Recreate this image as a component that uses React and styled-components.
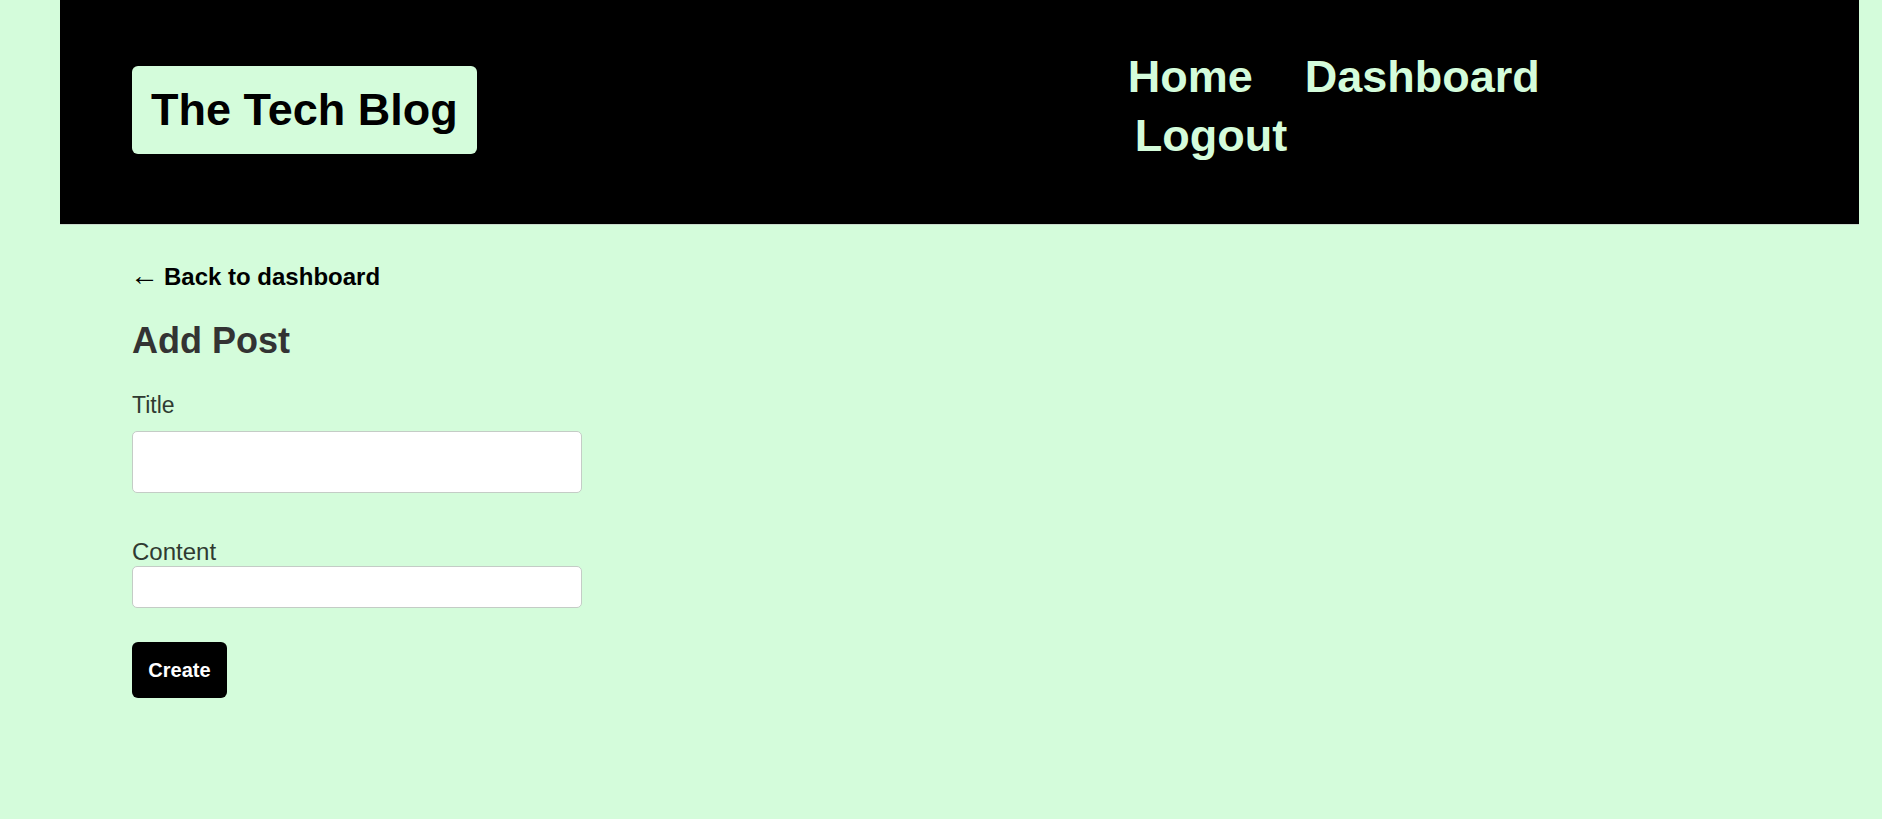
import React from 'react';
import styled, { createGlobalStyle } from 'styled-components';

const GlobalStyle = createGlobalStyle`
  html, body {
    margin: 0;
    padding: 0;
    background: #d4fcdb;
    font-family: 'Liberation Sans', Arial, sans-serif;
    color: #333;
  }
  * { box-sizing: border-box; }
`;

const Page = styled.div`
  min-height: 819px;
  padding: 0 23px 0 60px;
`;

const Header = styled.header`
  height: 225px;
  background: #000;
  border-bottom: 1px solid #c8d9cb;
  display: flex;
  align-items: center;
  padding: 0 72px;
`;

const Logo = styled.a`
  display: block;
  background: #d4fcdb;
  color: #000;
  border-radius: 6px;
  padding: 19px 19px;
  margin-bottom: 5px;
  font-weight: 700;
  font-size: 45px;
  line-height: 50px;
  text-decoration: none;
`;

const Nav = styled.nav`
  display: flex;
  flex-wrap: wrap;
  column-gap: 52px;
  width: 460px;
  margin-left: 651px;
  margin-bottom: 13px;
`;

const NavLink = styled.a`
  color: #d4fcdb;
  font-weight: 700;
  font-size: 45px;
  line-height: 59px;
  text-decoration: none;
  margin-left: ${p => p.$indent || 0}px;
`;

const Main = styled.main`
  padding: 37px 72px 40px;
`;

const BackLink = styled.a`
  display: flex;
  align-items: baseline;
  gap: 5px;
  height: 26px;
  color: #000;
  font-weight: 700;
  font-size: 24px;
  line-height: 26px;
  text-decoration: none;
`;

const Arrow = styled.span`
  font-family: 'Liberation Sans', sans-serif;
  font-weight: 400;
  font-size: 29px;
  line-height: 26px;
  margin-left: -2px;
`;

const Heading = styled.h2`
  margin: 32px 0 0;
  font-size: 36px;
  line-height: 42px;
  font-weight: 700;
  color: #333;
`;

const Form = styled.form`
  display: flex;
  flex-direction: column;
  align-items: flex-start;
  margin-top: 29px;
`;

const Label = styled.label`
  font-size: ${p => p.$size}px;
  line-height: 28px;
  color: #2f3a31;
  margin-bottom: ${p => p.$gap}px;
`;

const Input = styled.input`
  width: 450px;
  height: ${p => p.$h}px;
  border: 1px solid #c4ccc6;
  border-radius: 5px;
  background: #fff;
  font-size: 18px;
  padding: 0 10px;
  margin-bottom: ${p => p.$after}px;
  outline: none;
`;

const Button = styled.button`
  background: #000;
  color: #fff;
  border: none;
  border-radius: 6px;
  width: 95px;
  height: 56px;
  font-family: 'Liberation Sans', Arial, sans-serif;
  font-weight: 700;
  font-size: 20px;
  cursor: pointer;
`;

export default function App() {
  return (
    <>
      <GlobalStyle />
      <Page>
        <Header>
          <Logo href="#">The Tech Blog</Logo>
          <Nav>
            <NavLink href="#">Home</NavLink>
            <NavLink href="#">Dashboard</NavLink>
            <NavLink href="#" $indent={7}>Logout</NavLink>
          </Nav>
        </Header>
        <Main>
          <BackLink href="#"><Arrow>←</Arrow>Back to dashboard</BackLink>
          <Heading>Add Post</Heading>
          <Form onSubmit={e => e.preventDefault()}>
            <Label htmlFor="title" $size={23} $gap={12}>Title</Label>
            <Input id="title" $h={62} $after={45} />
            <Label htmlFor="content" $size={24} $gap={0}>Content</Label>
            <Input id="content" $h={42} $after={34} />
            <Button type="submit">Create</Button>
          </Form>
        </Main>
      </Page>
    </>
  );
}
